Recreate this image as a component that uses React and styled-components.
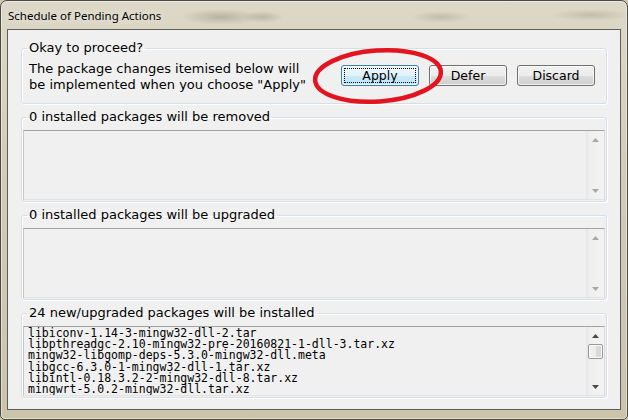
import React from "react";
import styled, { createGlobalStyle } from "styled-components";

const GlobalStyle = createGlobalStyle`
  html, body {
    margin: 0;
    padding: 0;
    overflow: hidden;
    background: #cfc8b1;
  }
`;

const Window = styled.div`
  box-sizing: border-box;
  width: 628px;
  height: 420px;
  display: flex;
  flex-direction: column;
  border: 1px solid #4b4a45;
  border-radius: 7px 7px 5px 5px;
  background:
    radial-gradient(ellipse 40px 8px at 220px 16px, rgba(120, 110, 90, 0.35), transparent),
    radial-gradient(ellipse 20px 6px at 262px 16px, rgba(120, 110, 90, 0.3), transparent),
    radial-gradient(ellipse 30px 6px at 440px 16px, rgba(120, 110, 90, 0.25), transparent),
    radial-gradient(ellipse 40px 6px at 590px 14px, rgba(120, 110, 90, 0.25), transparent),
    linear-gradient(180deg, #ddd8c7 0%, #d3ccb6 40%, #cbc3aa 100%);
  box-shadow: inset 0 0 0 1px rgba(255, 255, 255, 0.45);
  overflow: hidden;
`;

const TitleBar = styled.div`
  height: 28px;
  flex: none;
  display: flex;
  align-items: center;
  padding-left: 7px;
`;

const Title = styled.span`
  font-family: "Noto Sans", "DejaVu Sans", sans-serif;
  font-size: 11.5px;
  color: #000;
  text-shadow: 0 0 6px rgba(255, 255, 255, 0.8);
`;

const Client = styled.div`
  flex: 1;
  margin: 0 6px 9px 6px;
  border: 1px solid #5d5d5b;
  background: #f0f0f0;
  padding: 11px 13px 9px 13px;
  display: flex;
  flex-direction: column;
  gap: 6px;
  font-family: "DejaVu Sans", Verdana, sans-serif;
  font-size: 13px;
  color: #000;
`;

const Group = styled.fieldset`
  margin: 0;
  padding: 0;
  min-width: 0;
  border: 1px solid #d5dfe5;
  border-radius: 3px;
  box-shadow: inset 1px 1px 0 #fff, 1px 1px 0 #fff;
`;

const Legend = styled.legend`
  margin-left: 5px;
  padding: 0 2px;
  line-height: 14px;
  font-size: 13px;
  color: #000;
`;

const ProceedRow = styled.div`
  position: relative;
  display: flex;
  align-items: flex-start;
  padding: 6px 11px 10px 7px;
`;

const Message = styled.p`
  margin: 0;
  flex: 1;
  line-height: 16px;
  white-space: nowrap;
`;

const Buttons = styled.div`
  display: flex;
  gap: 10px;
  margin-top: 4px;
`;

const Button = styled.button`
  box-sizing: border-box;
  width: 78px;
  height: 21px;
  padding: 2px;
  font-family: "DejaVu Sans", Verdana, sans-serif;
  font-size: 12.5px;
  color: #000;
  border-radius: 3px;
  border: 1px solid ${(p) => (p.$default ? "#3c7fb1" : "#707070")};
  background: ${(p) =>
    p.$default
      ? "linear-gradient(180deg, #eef8fe 0%, #e0f2fc 50%, #cdebfb 51%, #bde2f6 100%)"
      : "linear-gradient(180deg, #f2f2f2 0%, #ebebeb 50%, #dddddd 51%, #cfcfcf 100%)"};
  box-shadow: inset 0 0 0 1px rgba(255, 255, 255, 0.7);
  display: flex;
`;

const FocusRing = styled.span`
  flex: 1;
  display: flex;
  align-items: center;
  justify-content: center;
  outline: ${(p) => (p.$on ? "1px dotted #000" : "none")};
  outline-offset: -1px;
  line-height: 14px;
`;

const Ellipse = styled.svg`
  position: absolute;
  left: 288px;
  top: -10px;
  pointer-events: none;
`;

const ListWrap = styled.div`
  padding: 6px 1px 1px 1px;
`;

const ListBox = styled.div`
  height: 70px;
  box-sizing: border-box;
  display: flex;
  border-style: solid;
  border-width: 1px;
  border-color: #a3a3a3 #dadada #e3e3e3 #c6c6c6;
  background: #f0f0f0;
`;

const Items = styled.div`
  flex: 1;
  padding: 1px 4px 0;
  font-family: "DejaVu Sans Mono", "Liberation Mono", monospace;
  font-size: 11.5px;
  line-height: 11.2px;
  white-space: pre;
  overflow: hidden;
`;

const ScrollBar = styled.div`
  width: 17px;
  flex: none;
  display: flex;
  flex-direction: column;
  background: linear-gradient(90deg, #e6e6e6 0, #efefef 2px, #f3f3f3 100%);
  border-left: 1px solid #e8e8e8;
`;

const ArrowBtn = styled.div`
  height: 17px;
  flex: none;
  display: flex;
  align-items: center;
  justify-content: center;
`;

const Track = styled.div`
  flex: 1;
  display: flex;
  flex-direction: column;
  align-items: center;
`;

const Thumb = styled.div`
  width: 15px;
  height: 15px;
  box-sizing: border-box;
  border: 1px solid #979797;
  border-radius: 2px;
  background: linear-gradient(90deg, #f1f1f1 0%, #ececec 50%, #dcdcdc 51%, #d4d4d4 100%);
  box-shadow: inset 0 0 0 1px #fafafa;
`;

const Arrow = ({ up, color }) => (
  <svg width="7" height="4" viewBox="0 0 7 4">
    <path d={up ? "M3.5 0 L7 4 L0 4 Z" : "M0 0 L7 0 L3.5 4 Z"} fill={color} />
  </svg>
);

const PackageList = ({ items, scrolls }) => {
  const color = scrolls ? "#4a4a4a" : "#a8a8a8";
  return (
    <ListWrap>
      <ListBox>
        <Items>{items.join("\n")}</Items>
        <ScrollBar>
          <ArrowBtn>
            <Arrow up color={color} />
          </ArrowBtn>
          <Track>{scrolls && <Thumb />}</Track>
          <ArrowBtn>
            <Arrow color={color} />
          </ArrowBtn>
        </ScrollBar>
      </ListBox>
    </ListWrap>
  );
};

// only the rows visible in the list viewport
const installs = [
  "libiconv-1.14-3-mingw32-dll-2.tar",
  "libpthreadgc-2.10-mingw32-pre-20160821-1-dll-3.tar.xz",
  "mingw32-libgomp-deps-5.3.0-mingw32-dll.meta",
  "libgcc-6.3.0-1-mingw32-dll-1.tar.xz",
  "libintl-0.18.3.2-2-mingw32-dll-8.tar.xz",
  "mingwrt-5.0.2-mingw32-dll.tar.xz",
];

export default function App() {
  return (
    <>
      <GlobalStyle />
      <Window>
        <TitleBar>
          <Title>Schedule of Pending Actions</Title>
        </TitleBar>
        <Client>
          <Group>
            <Legend>Okay to proceed?</Legend>
            <ProceedRow>
              <Message>
                The package changes itemised below will
                <br />
                be implemented when you choose "Apply"
              </Message>
              <Buttons>
                <Button $default>
                  <FocusRing $on>Apply</FocusRing>
                </Button>
                <Button>
                  <FocusRing>Defer</FocusRing>
                </Button>
                <Button>
                  <FocusRing>Discard</FocusRing>
                </Button>
              </Buttons>
              <Ellipse width="136" height="62" viewBox="0 0 136 62">
                <ellipse
                  cx="68"
                  cy="31"
                  rx="63"
                  ry="25.5"
                  fill="none"
                  stroke="#e2141f"
                  strokeWidth="4.5"
                  transform="rotate(-4 68 31)"
                />
              </Ellipse>
            </ProceedRow>
          </Group>
          <Group>
            <Legend>0 installed packages will be removed</Legend>
            <PackageList items={[]} />
          </Group>
          <Group>
            <Legend>0 installed packages will be upgraded</Legend>
            <PackageList items={[]} />
          </Group>
          <Group>
            <Legend>24 new/upgraded packages will be installed</Legend>
            <PackageList items={installs} scrolls />
          </Group>
        </Client>
      </Window>
    </>
  );
}
